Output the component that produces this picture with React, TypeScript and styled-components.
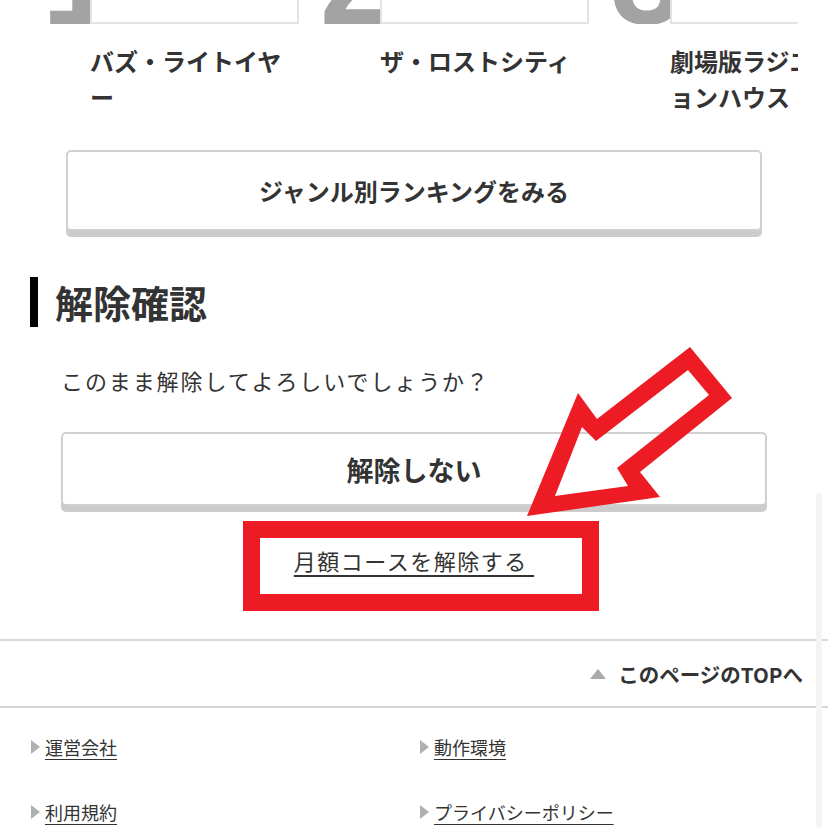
import React from "react";
import styled, { createGlobalStyle } from "styled-components";

const GlobalStyle = createGlobalStyle`
  html, body {
    margin: 0;
    padding: 0;
    background: #fff;
  }
  body {
    font-family: "Noto Sans CJK JP", "Noto Sans", sans-serif;
    color: #333;
  }
  * {
    box-sizing: border-box;
  }
`;

const rankings = [
  { rank: 1, title: "バズ・ライトイヤー", shift: 8 },
  { rank: 2, title: "ザ・ロストシティ", shift: -4 },
  { rank: 3, title: "劇場版ラジエーションハウス", shift: -3 },
];

const footerLinks = ["運営会社", "動作環境", "利用規約", "プライバシーポリシー"];

const App = () => (
  <Page>
    <GlobalStyle />
    <Carousel>
      {rankings.map((item) => (
        <Card key={item.rank}>
          <ThumbRow>
            <RankNumber style={{ left: item.shift }}>{item.rank}</RankNumber>
            <Thumb />
          </ThumbRow>
          <CardTitle>{item.title}</CardTitle>
        </Card>
      ))}
    </Carousel>

    <GenreArea>
      <BoxButton height={81} fontSize={24}>
        ジャンル別ランキングをみる
      </BoxButton>
    </GenreArea>

    <SectionHeading>解除確認</SectionHeading>

    <ConfirmBody>
      <Message>このまま解除してよろしいでしょうか？</Message>
      <ButtonSpacer>
        <BoxButton height={74} fontSize={27}>
          解除しない
        </BoxButton>
      </ButtonSpacer>
      <CancelRow>
        <CancelLink href="#">月額コースを解除する&nbsp;</CancelLink>
      </CancelRow>
    </ConfirmBody>

    <PageTopRow>
      <UpMark />
      <PageTopText>このページのTOPへ</PageTopText>
    </PageTopRow>

    <FooterGrid>
      {footerLinks.map((label) => (
        <FooterItem key={label}>
          <RightMark />
          <FooterLink href="#">{label}</FooterLink>
        </FooterItem>
      ))}
    </FooterGrid>

    <HighlightBox />
    <ArrowMark viewBox="520 340 220 185" width="220" height="185">
      <path
        fillRule="evenodd"
        fill="#ed1c24"
        d="M527 516 L578 393 L597 419 L690 347 L732 398 L640 472 L660 497 Z M555 496 L582 427 L596 441 L688 370 L709 395 L617 468 L628 486 Z"
      />
    </ArrowMark>
    <ScrollThumb />
  </Page>
);

const Page = styled.div`
  position: relative;
  width: 828px;
  height: 828px;
  overflow: hidden;
  background: #fff;
`;

const Carousel = styled.div`
  display: flex;
  gap: 25px;
  margin-left: 34px;
  width: 764px;
  overflow: hidden;
`;

const Card = styled.div`
  flex: 0 0 265px;
  padding-left: 56px;
`;

const ThumbRow = styled.div`
  position: relative;
  height: 24px;
  overflow: hidden;
  margin-left: -56px;
  padding-left: 56px;
`;

const RankNumber = styled.span`
  position: absolute;
  bottom: -20px;
  font-family: "Liberation Sans", Arial, sans-serif;
  font-weight: 700;
  font-size: 130px;
  line-height: 1;
  color: #a3a3a3;
`;

const Thumb = styled.div`
  position: relative;
  z-index: 1;
  width: 209px;
  height: 24px;
  background: #fff;
  border: 2px solid #e3e3e3;
  border-top: none;
`;

const CardTitle = styled.div`
  width: 209px;
  margin-top: 19px;
  font-size: 24px;
  font-weight: 700;
  line-height: 36px;
  color: #333;
  line-break: anywhere;
  word-break: break-all;
`;

const GenreArea = styled.div`
  padding: 0 66px;
  margin-top: 35px;
`;

const BoxButton = styled.button<{ height: number; fontSize: number }>`
  display: flex;
  align-items: center;
  justify-content: center;
  width: 100%;
  height: ${(p) => p.height}px;
  padding: 0;
  background: #fff;
  border: 2px solid #d0d0d0;
  border-radius: 5px;
  box-shadow: 0 6px 0 #cccccc;
  font-family: inherit;
  font-size: ${(p) => p.fontSize}px;
  font-weight: 700;
  color: #333;
`;

const SectionHeading = styled.h2`
  margin: 46px 30px 0;
  height: 50px;
  padding-left: 17px;
  border-left: 8px solid #000;
  font-size: 38px;
  font-weight: 700;
  line-height: 50px;
  color: #333;
`;

const ConfirmBody = styled.div`
  padding: 0 61px;
`;

const Message = styled.p`
  margin: 35px 0 0;
  font-size: 22px;
  letter-spacing: 1.9px;
  line-height: 36px;
  color: #333;
`;

const ButtonSpacer = styled.div`
  margin-top: 34px;
`;

const CancelRow = styled.div`
  margin-top: 36px;
  text-align: center;
  line-height: 36px;
`;

const CancelLink = styled.a`
  font-size: 22px;
  letter-spacing: 1.5px;
  color: #333;
  text-decoration: underline;
  text-underline-offset: 5px;
`;

const PageTopRow = styled.div`
  display: flex;
  align-items: center;
  justify-content: flex-end;
  height: 69px;
  margin-top: 58px;
  padding-right: 25px;
  border-top: 2px solid #d8d8d8;
  border-bottom: 2px solid #d8d8d8;
`;

const UpMark = styled.span`
  width: 0;
  height: 0;
  margin-right: 12px;
  border-left: 8px solid transparent;
  border-right: 8px solid transparent;
  border-bottom: 10px solid #aaa;
`;

const PageTopText = styled.span`
  font-size: 20.5px;
  font-weight: 700;
  color: #333;
`;

const FooterGrid = styled.div`
  display: grid;
  grid-template-columns: 389px 1fr;
  grid-auto-rows: 65px;
  align-items: center;
  padding: 6px 0 0 31px;
`;

const FooterItem = styled.div`
  display: flex;
  align-items: center;
  gap: 5px;
`;

const RightMark = styled.span`
  width: 0;
  height: 0;
  border-top: 7px solid transparent;
  border-bottom: 7px solid transparent;
  border-left: 9px solid #b0b0b0;
`;

const FooterLink = styled.a`
  font-size: 18px;
  color: #333;
  text-decoration: underline;
  text-underline-offset: 4px;
`;

const HighlightBox = styled.div`
  position: absolute;
  left: 243px;
  top: 521px;
  width: 356px;
  height: 90px;
  border: 17px solid #ed1c24;
  pointer-events: none;
`;

const ArrowMark = styled.svg`
  position: absolute;
  left: 520px;
  top: 340px;
  pointer-events: none;
`;

const ScrollThumb = styled.div`
  position: absolute;
  right: 6px;
  top: 493px;
  bottom: 0;
  width: 6px;
  border-radius: 3px;
  background: #f4f4f4;
`;

export default App;
